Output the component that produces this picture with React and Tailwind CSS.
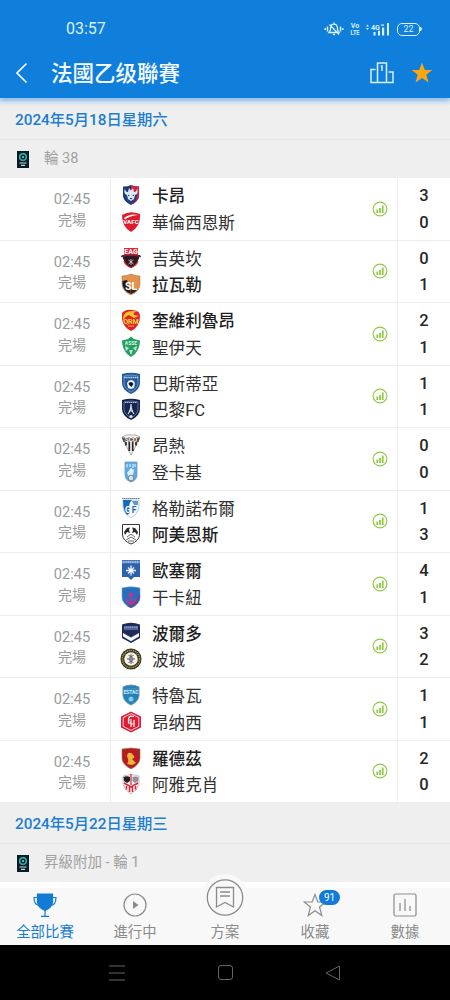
import React, { useState } from "react";

const SHIELD = "M2 2 Q11 -0.5 20 2 L20 11 Q20 18 11 22 Q2 18 2 11 Z";

// 球隊隊徽
const crests = {
  caen: (
    <>
      <path d="M3 2.5 Q7 3 11 1 Q15 3 19 2.5 V12 Q18 18 11 21 Q4 18 3 12Z" fill="#17376f" />
      <path d="M11 1 Q15 3 19 2.5 V12 Q18 18 11 21Z" fill="#d51f38" />
      <path d="M4.8 10 Q5 18 11 20 Q17 18 17.2 10Z" fill="#1c4280" />
      <path d="M5 4 Q5 8 8 8 L9 4 L11 6.5 L13 4 L14 8 Q17 8 17 4 Q19 10 15 11 L14 15 L11 17 L8 15 L7 11 Q3 10 5 4Z" fill="#dbe8f5" />
      <path d="M8 10.5l2 1.5h-2zM14 10.5l-2 1.5h2zM9.5 14h3l-1.5 1.5z" fill="#183363" />
    </>
  ),
  valenciennes: (
    <>
      <path d="M2 4 Q10 -1 20 3 Q21 15 11 21 Q2 16 2 4Z" fill="#e11b2b" />
      <path d="M4 7Q10 2 18 4Q10 4.5 5 8.5Z" fill="#fff" />
      <text x="11" y="13" fontSize="6.2" fontWeight="700" textAnchor="middle" fill="#fff">VAFC</text>
    </>
  ),
  guingamp: (
    <>
      <path d="M2 8 H20 Q18 17 11 21 Q4 17 2 8Z" fill="#2c171d" />
      <path d="M4 1H18V8H4Z" fill="#e52334" />
      <text x="11" y="7.2" fontSize="7" fontWeight="700" textAnchor="middle" fill="#fff">EAG</text>
      <path d="M1 9.5Q11 7 21 9.5" stroke="#6d2833" strokeWidth="1.3" fill="none" />
      <path d="M11 12v6M8.5 13l5 4M13.5 13l-5 4" stroke="#d5c8cc" strokeWidth=".9" />
      <path d="M4 14Q6 19 11 20.5Q16 19 18 14" stroke="#c8202c" strokeWidth="1.3" fill="none" />
    </>
  ),
  laval: (
    <>
      <path d="M2 3Q6 3 11 1Q16 3 20 3V11Q20 18 11 22Q2 18 2 11Z" fill="#e4924f" stroke="#a87146" strokeWidth=".5" />
      <path d="M2.5 8L7 7L8 10L11 21Q3 18 2.5 11Z" fill="#191719" />
      <path d="M10 16H18Q16 19 11 21Z" fill="#29211f" />
      <text x="11" y="17" fontSize="10.5" fontWeight="700" textAnchor="middle" fill="#fff">SL</text>
    </>
  ),
  quevilly: (
    <>
      <path d="M2 4Q6 0 12 1Q20 1 20 7Q20 18 11 22Q3 18 2 10Z" fill="#df2428" />
      <path d="M3 9Q4 0 18 2.5Q12 3 14 6L19 7L14 9L9 6Q5 7 3 12Z" fill="#ffc52c" />
      <text x="11" y="14.5" fontSize="7" fontWeight="700" textAnchor="middle" fill="#ffd33d">QRM</text>
      <path d="M8 17h6" stroke="#f6b32a" />
    </>
  ),
  etienne: (
    <>
      <path d="M2 4.5L8 3L11 .5L14 3L20 4.5Q20 12 15 18L11 21L7 18Q2 12 2 4.5Z" fill="#24a064" />
      <text x="11" y="8.5" fontSize="5" fontWeight="700" textAnchor="middle" fill="#d6f1e2">ASSE</text>
      <path d="M5 10L9 12L6 15ZM17 10L13 12L16 15ZM9 14h4l-2 5z" fill="#bce4cf" />
    </>
  ),
  bastia: (
    <>
      <path d={SHIELD} fill="#245a9d" />
      <path d="M4 4Q11 2 18 4V11Q18 16 11 20Q4 16 4 11Z" fill="none" stroke="#82add6" strokeWidth=".7" />
      <path d="M4 5.5h14" stroke="#b6d0eb" strokeWidth="1.5" strokeDasharray="1.6 .5" />
      <path d="M7 11Q9 7 13 8.5Q16 10 14 16L11 17L8 16Z" fill="#f4f6f8" />
      <path d="M8.5 11Q12 8.5 13.5 12L11.5 15L9 13Z" fill="#141c2d" />
    </>
  ),
  paris: (
    <>
      <path d={SHIELD} fill="#17264f" />
      <path d="M4 4Q11 2 18 4V11Q18 16 11 20Q4 16 4 11Z" fill="none" stroke="#7d8cb3" strokeWidth=".7" />
      <path d="M5 4.5h12" stroke="#a8c0df" strokeDasharray="1.5 .5" />
      <path d="M11 6Q11 12 8 16M11 6Q11 12 14 16M9 13h4" fill="none" stroke="#e9effa" strokeWidth="1.1" />
      <circle cx="11" cy="18.5" r="1.6" fill="#dce4f0" />
    </>
  ),
  angers: (
    <>
      <path d="M2 3L6 1H16L20 3L17 10L11 21L5 10Z" fill="#f6f1ee" stroke="#6a625f" strokeWidth=".5" />
      <path d="M6 8v3.5M9.3 8v9M12.7 8v9M16 8v3.5" stroke="#2b2423" strokeWidth="1.7" />
      <path d="M2 3.5H20L18.5 8H3.5Z" fill="#574e4a" />
      <text x="11" y="7.9" fontSize="6.3" fontWeight="700" textAnchor="middle" fill="#fff">SCO</text>
    </>
  ),
  dunkerque: (
    <>
      <path d="M5 1H17V14Q17 19 11 21Q5 19 5 14Z" fill="#5bace0" stroke="#7896b2" strokeWidth=".8" />
      <path d="M7 3v3.5M10 3v3M13 3v4M15 3v3" stroke="#e6f5ff" strokeWidth="1" />
      <path d="M11 7L14 9L13 14L9 16L7 12Z" fill="#dcf0fb" />
      <circle cx="11" cy="17" r="2.8" fill="#d9e1e8" stroke="#436886" strokeWidth=".7" />
    </>
  ),
  grenoble: (
    <>
      <path d="M3 3H19V10Q18 17 11 21Q4 17 3 10Z" fill="#f5faff" stroke="#769fc9" strokeWidth=".5" />
      <path d="M3 3H12Q8.5 6 9.5 9L10 16L7 18Q3 14 3 3Z" fill="#176bb5" />
      <path d="M12 4H18V8H14Z" fill="#5b9bd0" />
      <path d="M2 1.5H20" stroke="#5a7392" strokeWidth=".9" strokeDasharray="1.6 .4" />
      <text x="7.8" y="15.5" fontSize="8.5" fontWeight="700" textAnchor="middle" fill="#fff">G</text>
      <text x="14" y="15.5" fontSize="8.5" fontWeight="700" textAnchor="middle" fill="#1768b0">F</text>
    </>
  ),
  amiens: (
    <>
      <path d="M2.5 1.5H19.5V12Q19 18 11 21Q3 18 2.5 12Z" fill="#fff" stroke="#37373a" />
      <path d="M4 9L7 5L10 4.5L9 7L10 10L7 9L5 12ZM18 9L15 5L12 4.5L13 7L12 10L15 9L17 12Z" fill="#29292b" />
      <path d="M7 14L11 11L15 14M6 17L11 14L16 17M8 18h6" fill="none" stroke="#58585a" strokeWidth=".9" />
    </>
  ),
  auxerre: (
    <>
      <path d="M2 1H20V18H14L11 21L8 18H2Z" fill="#2d62ab" />
      <path d="M2.5 3H19.5" stroke="#a5bfdf" strokeWidth="2.4" strokeDasharray="1.4 .4" />
      <path d="M11 6.5V16.5M6 11.5H16M8 8.5L14 14.5M14 8.5L8 14.5" stroke="#e8f3ff" strokeWidth="1.3" />
      <circle cx="11" cy="11.5" r="1.6" fill="#fff" />
    </>
  ),
  concarneau: (
    <>
      <path d={SHIELD} fill="#286fbb" stroke="#6aa5d4" strokeWidth=".6" />
      <path d="M11 22Q20 18 20 11V6Q17 16 7 20Z" fill="#5b4ca0" />
      <path d="M11 6V18M8.5 8.5h5M6.5 13Q7 17 11 18Q15 17 15.5 13" fill="none" stroke="#d82b87" strokeWidth="1.5" />
    </>
  ),
  bordeaux: (
    <>
      <path d="M2 2.5Q11 -1 20 2.5V16L11 21L2 16Z" fill="#202b59" />
      <path d="M4 4H18V8H4Z" fill="#56659a" />
      <path d="M4 5.2H18" stroke="#aeb9d5" strokeWidth=".8" strokeDasharray="1.5 .5" />
      <path d="M3 11L11 15.5L19 11V14.5L11 19.2L3 14.5Z" fill="#f4f7fb" />
    </>
  ),
  pau: (
    <>
      <circle cx="11" cy="11" r="10.5" fill="#332f20" />
      <circle cx="11" cy="11" r="8.6" fill="none" stroke="#a59452" strokeWidth="1.5" strokeDasharray="1.4 .7" />
      <circle cx="11" cy="11" r="6.8" fill="#f5f2e7" />
      <path d="M11 6v10M7 11h8M8.5 7.5q2.5 2 5 0M8.5 14.5q2.5-2 5 0" fill="none" stroke="#5e6070" strokeWidth="1" />
      <circle cx="11" cy="11" r="2" fill="none" stroke="#5e6070" strokeWidth=".8" />
    </>
  ),
  troyes: (
    <>
      <path d="M3 3Q11 -1 19 3V12Q18 18 11 21Q4 18 3 12Z" fill="#2581b9" stroke="#7395a7" />
      <text x="11" y="10" fontSize="4.8" fontWeight="700" textAnchor="middle" fill="#d7f0ff">ESTAC</text>
      <path d="M5 5h12" stroke="#479aca" />
      <circle cx="11" cy="15" r="2.6" fill="#65b4dc" />
      <path d="M9.5 14h3M9.5 16h3" stroke="#d9f2ff" strokeWidth=".8" />
    </>
  ),
  annecy: (
    <>
      <path d="M11 .5L21 5.5V16.5L11 21.5L1 16.5V5.5Z" fill="#e01b35" />
      <path d="M11 2.6L18.8 6.6V15.4L11 19.4L3.2 15.4V6.6Z" fill="none" stroke="#fff" strokeWidth=".8" />
      <path d="M14 5.5Q9 4 8.5 8V12H11M8.5 9H12M11 10V16M14 9V16M11 13H14" fill="none" stroke="#fff" strokeWidth="1.2" />
    </>
  ),
  rodez: (
    <>
      <path d="M2 2L11 1L20 2V12Q19 18 11 22Q3 18 2 12Z" fill="#b31c25" stroke="#9d7a2a" strokeWidth=".6" />
      <path d="M8 6Q12 5 13 8Q15 9 14 11L12 12L16 16L12 18L7 17Q9 14 8 12L7 9Z" fill="#f0b43a" />
    </>
  ),
  ajaccio: (
    <>
      <path d="M3 3L8 2L11 1L14 2L19 3V11Q18 17 11 21Q4 17 3 11Z" fill="#f4eff0" stroke="#a5a3a5" strokeWidth=".6" />
      <path d="M3.5 4Q7 2.5 10 4V8L7 10L4 8Z" fill="#202124" />
      <path d="M12.5 4Q15 3 18.5 4V8L15 10L12.5 8Z" fill="#8f9297" />
      <path d="M4 10L11 14L18 10M6.5 13V16.5M9.5 14V19M12.5 14V19M15.5 13V16.5" fill="none" stroke="#d92633" strokeWidth="1.5" />
      <path d="M11 1V12" stroke="#d92633" strokeWidth="1.2" />
    </>
  ),
};

const matches = [
  { home: "卡昂", away: "華倫西恩斯", icons: ["caen", "valenciennes"], score: [3, 0] },
  { home: "吉英坎", away: "拉瓦勒", icons: ["guingamp", "laval"], score: [0, 1] },
  { home: "奎維利魯昂", away: "聖伊天", icons: ["quevilly", "etienne"], score: [2, 1] },
  { home: "巴斯蒂亞", away: "巴黎FC", icons: ["bastia", "paris"], score: [1, 1] },
  { home: "昂熱", away: "登卡基", icons: ["angers", "dunkerque"], score: [0, 0] },
  { home: "格勒諾布爾", away: "阿美恩斯", icons: ["grenoble", "amiens"], score: [1, 3] },
  { home: "歐塞爾", away: "干卡紐", icons: ["auxerre", "concarneau"], score: [4, 1] },
  { home: "波爾多", away: "波城", icons: ["bordeaux", "pau"], score: [3, 2] },
  { home: "特魯瓦", away: "昂纳西", icons: ["troyes", "annecy"], score: [1, 1] },
  { home: "羅德茲", away: "阿雅克肖", icons: ["rodez", "ajaccio"], score: [2, 0] },
];

const StatusBar = () => (
  <div className="flex h-[58px] items-center justify-between pl-[66px] pr-7 text-[#d9f1ff]">
    <span className="text-[16px]">03:57</span>
    <div className="flex items-center">
      <svg className="h-4 w-5" viewBox="0 0 20 16" fill="none" stroke="currentColor" strokeWidth="1.3">
        <path d="M4.8 11.5H15.2L13.5 9V7Q13 3.2 10 3.2Q7 3.2 6.5 7V9ZM5.5 3.5L15 13.5M10 1.5v1.5M9 13.5h2" />
        <path d="M3.5 5.5v5M16.5 5.5v5M1.2 7v2M18.8 7v2" strokeWidth="1.5" />
      </svg>
      <svg className="ml-[6px] h-[18px] w-[10px]" viewBox="0 0 10 18" fill="currentColor" fontSize="6.5" fontWeight="700">
        <text x="0.8" y="7.5" textLength="8.4" lengthAdjust="spacingAndGlyphs">Vo</text>
        <text x="0.5" y="15.2" textLength="9" lengthAdjust="spacingAndGlyphs">LTE</text>
      </svg>
      <svg className="ml-[6px] h-[14px] w-6" viewBox="0 0 24 14" fill="currentColor">
        <path d="M0 4.5L1.5 2.5L3 4.5ZM0 6H3L1.5 8Z" />
        <text x="5" y="7.5" fontSize="8" fontWeight="700" textLength="9" lengthAdjust="spacingAndGlyphs">4G</text>
        <path d="M15 2.5h3v1.2h-3zM7.5 10h2v3.5h-2zM12 8.8h2v4.7h-2zM16 5.5h2.2v8h-2.2zM21 1h2v12.5h-2z" />
      </svg>
      <div className="ml-[7px] flex items-center">
        <div className="flex h-[13px] w-[23px] items-center justify-center rounded-[5px] border border-current text-[9px] leading-none">
          22
        </div>
        <div className="h-1 w-[2px] rounded-r bg-[#d9f1ff]" />
      </div>
    </div>
  </div>
);

const Header = () => (
  <header className="relative z-10 h-[98px] shrink-0 bg-[#107edb] shadow-[0_1px_6px_1px_rgba(16,126,219,0.65)]">
    <StatusBar />
    <div className="flex h-[30px] items-center pl-4 pr-[17px] text-[#f4fcff]">
      <svg className="h-[22px] w-3" viewBox="0 0 12 22" fill="none" stroke="currentColor" strokeWidth="1.7">
        <path d="M10.5 1.5L1 11L10.5 20.5" />
      </svg>
      <h1 className="ml-[23px] flex-1 pt-[2px] text-[21.5px] font-medium leading-[30px]">法國乙级聯賽</h1>
      <svg className="h-[22px] w-6" viewBox="0 0 24 22" fill="none" stroke="#d9f1ff" strokeWidth="1.5">
        <path d="M5.5 7.5H1V20.5H23V10H18.5M7.5 20.5V1H16.5V20.5M10.8 4.5L12 4V9" />
      </svg>
      <svg className="ml-[17px] h-[22px] w-[22px]" viewBox="0 0 22 22" fill="#ffa50e">
        <path d="M11 .5L13.8 8H21.3L15.3 12.7L17.5 20.5L11 16L4.5 20.5L6.7 12.7L.7 8H8.2Z" />
      </svg>
    </div>
  </header>
);

const LeagueIcon = () => (
  <svg className="h-[17px] w-[12px]" viewBox="0 0 12 17">
    <rect width="12" height="17" fill="#071e2a" />
    <circle cx="6" cy="6" r="3.3" fill="none" stroke="#29b9ab" strokeWidth="1.5" />
    <circle cx="6" cy="6" r="1" fill="#70e3d1" />
    <path d="M2.5 12h7M4 14.3h4" stroke="#c3dadd" strokeWidth="1.2" />
  </svg>
);

const SectionTitle = ({ date, round }) => (
  <>
    <h2 className="flex h-[41px] items-center border-b border-[#e8e8e8] bg-[#efeff0] pl-[15px] pt-[3px] text-[15.3px] font-medium text-[#1b7ed0]">
      {date}
    </h2>
    <div className="flex h-[38px] items-center bg-[#efeff0] pl-[17px] text-[14.5px] text-[#a1a1a1]">
      <LeagueIcon />
      <span className="ml-[15px]">{round}</span>
    </div>
  </>
);

const Team = ({ name, icon, win }) => (
  <div className="flex h-[26.5px] items-center">
    <svg className="h-[22px] w-[22px]" viewBox="0 0 22 22">
      {crests[icon]}
    </svg>
    <span
      className={`ml-[10px] pt-[4px] text-[16.6px] leading-[26px] ${
        win ? "font-medium text-[#1f1f1f]" : "text-[#303030]"
      }`}
    >
      {name}
    </span>
  </div>
);

const MatchRow = ({ match }) => {
  const [home, away] = match.score;
  return (
    <div className="flex h-[62.5px] border-b border-[#ededed] bg-white">
      <div className="flex w-[111px] flex-col items-center border-r border-[#ededed] pl-[34px] pt-[11px] text-[14.6px] leading-[20px] text-[#9b9b9b]">
        <span>02:45</span>
        <span className="pt-[0.5px] text-[14px]">完場</span>
      </div>
      <div className="flex-1 pl-[9px] pt-[4px]">
        <Team name={match.home} icon={match.icons[0]} win={home > away} />
        <Team name={match.away} icon={match.icons[1]} win={away > home} />
      </div>
      <div className="flex w-[25px] items-center">
        <svg className="h-4 w-4" viewBox="0 0 16 16" fill="none" stroke="#91c947">
          <circle cx="8" cy="8" r="6.9" strokeWidth="1.2" />
          <path d="M5.3 8.5V12M8 7V12M10.7 4.5V12" strokeWidth="1.8" />
        </svg>
      </div>
      <div className="flex w-[53px] flex-col items-center border-l border-[#f0f0f0] pt-[5px] text-[16.5px] font-medium leading-[26.5px] text-[#272727]">
        <span>{home}</span>
        <span>{away}</span>
      </div>
    </div>
  );
};

const tabs = [
  {
    label: "全部比賽",
    icon: (
      <>
        <path d="M4.5 1H19.5V9Q19 15 12 17.5Q5 15 4.5 9Z" fill="currentColor" />
        <path d="M5 4.5H1Q1 12.5 7 12.5M19 4.5H23Q23 12.5 17 12.5M12 16V23M8 23.3H16" />
      </>
    ),
  },
  {
    label: "進行中",
    icon: (
      <>
        <circle cx="12" cy="12" r="11" />
        <path d="M10 8L15.5 12L10 16Z" fill="currentColor" stroke="none" />
      </>
    ),
  },
  { label: "方案" },
  {
    label: "收藏",
    badge: 91,
    icon: <path d="M12 1.5L14.8 9H22.8L16.5 14L18.8 22.5L12 17.7L5.2 22.5L7.5 14L1.2 9H9.2Z" />,
  },
  {
    label: "數據",
    icon: (
      <>
        <rect x="1" y="1" width="22" height="22" rx="1.5" />
        <path d="M7 10V18M12 6V18M17 13V18" />
      </>
    ),
  },
];

const TabBar = () => {
  const [active, setActive] = useState("全部比賽");

  return (
    <nav className="grid h-[57px] shrink-0 grid-cols-5 bg-[#f8f8f8]">
      {tabs.map((tab) => (
        <button
          key={tab.label}
          onClick={() => setActive(tab.label)}
          className={`relative flex flex-col items-center pt-[5px] ${
            active === tab.label ? "text-[#127bd4]" : "text-[#8b8b8b]"
          }`}
        >
          {tab.icon ? (
            <svg className="h-6 w-6" viewBox="0 0 24 24" fill="none" stroke="currentColor" strokeWidth="1.2">
              {tab.icon}
            </svg>
          ) : (
            <div className="-mt-[19px] mb-[-3px] h-[46px] w-[48px] rounded-t-full bg-[#f8f8f8] px-[5px] pt-[5px]">
              <svg className="h-[38px] w-[38px]" viewBox="0 0 38 38" fill="none" stroke="currentColor" strokeWidth="1.3">
                <circle cx="19" cy="18.5" r="17.7" />
                <path d="M10.5 8.5H27.5V28L19 23.5L10.5 28ZM14 13H24M14 17H24" />
              </svg>
            </div>
          )}
          <span className="mt-[6px] text-[14.4px] leading-5">{tab.label}</span>
          {tab.badge && (
            <span className="absolute left-[49px] top-[2px] flex h-[15px] w-[21px] items-center justify-center rounded-full bg-[#107bdc] text-[10px] text-white">
              {tab.badge}
            </span>
          )}
        </button>
      ))}
    </nav>
  );
};

const App = () => (
  <div className="flex h-[1000px] w-[450px] flex-col overflow-hidden bg-white font-[Roboto,'Noto_Sans_CJK_SC',sans-serif]">
    <Header />
    <main className="h-[790px] shrink-0 overflow-hidden pt-px">
      <SectionTitle date="2024年5月18日星期六" round="輪 38" />
      {matches.map((match) => (
        <MatchRow key={match.home} match={match} />
      ))}
      <SectionTitle date="2024年5月22日星期三" round="昇級附加 - 輪 1" />
    </main>
    <TabBar />
    {/* 系統導覽列 */}
    <div className="flex h-[55px] shrink-0 items-center justify-between bg-black pl-[109px] pr-[109px]">
      <svg className="h-4 w-4" viewBox="0 0 16 16" stroke="#656565">
        <path d="M0 1H16M0 8H16M0 15H16" />
      </svg>
      <div className="h-[15px] w-[15px] rounded-[3px] border border-[#656565]" />
      <svg className="h-4 w-4" viewBox="0 0 16 16" fill="none" stroke="#656565">
        <path d="M14.5 1V15L1 8Z" strokeLinejoin="round" />
      </svg>
    </div>
  </div>
);

export default App;
